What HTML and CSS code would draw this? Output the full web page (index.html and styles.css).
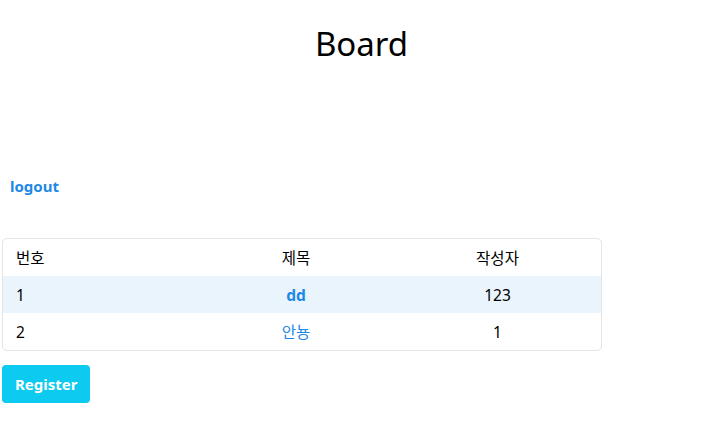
FILE: index.html
```html
<!DOCTYPE html>
<html lang="ko">
<head>
    <meta charset="UTF-8">
    <meta name="viewport" content="width=device-width, initial-scale=1.0">
    <title>Board</title>
    <link rel="stylesheet" href="styles.css">
</head>
<body>
    <h1 class="title">Board</h1>

    <div class="top-links">
        <a href="#" class="logout">logout</a>
    </div>

    <div class="board">
        <table class="board-table">
            <thead>
                <tr>
                    <th class="col-no">번호</th>
                    <th class="col-title">제목</th>
                    <th class="col-writer">작성자</th>
                </tr>
            </thead>
            <tbody>
                <tr class="active">
                    <td class="col-no">1</td>
                    <td class="col-title"><a href="#" class="post-link bold">dd</a></td>
                    <td class="col-writer">123</td>
                </tr>
                <tr>
                    <td class="col-no">2</td>
                    <td class="col-title"><a href="#" class="post-link">안뇽</a></td>
                    <td class="col-writer">1</td>
                </tr>
            </tbody>
        </table>
    </div>

    <button class="btn-register" type="button">Register</button>
</body>
</html>
```

FILE: styles.css
```css
body {
    font-family: 'Noto Sans', 'Noto Sans CJK KR', sans-serif;
    font-size: 15px;
    color: #000;
    background-color: #ffffff;
    margin: 0;
    padding: 0 2px;
}
.title {
    text-align: center;
    font-size: 33px;
    font-weight: 400;
    margin: 0;
    padding: 22px 0 0 18px;
    line-height: 44px;
}
.top-links {
    margin-top: 110px;
    padding-left: 8px;
}
.logout {
    color: #1e88e5;
    font-weight: 700;
    font-size: 15px;
    text-decoration: none;
}
.board {
    margin-top: 42px;
    width: 598px;
    border: 1px solid #e4e4e4;
    border-radius: 5px;
    overflow: hidden;
}
.board-table {
    width: 100%;
    border-collapse: collapse;
    table-layout: fixed;
}
.board-table th, .board-table td {
    box-sizing: border-box;
    height: 37px;
    padding: 0 13px;
    font-weight: 400;
    font-size: 15.5px;
}
.board-table thead th {
    height: 37px;
}
.col-no {
    width: 195px;
    text-align: left;
}
.col-title {
    width: 196px;
    text-align: center;
}
.col-writer {
    text-align: center;
}
.board-table tr.active {
    background-color: #eaf4fd;
}
.post-link {
    color: #1e88e5;
    text-decoration: none;
}
.post-link.bold {
    font-weight: 700;
}
.btn-register {
    margin-top: 14px;
    padding: 0 13px;
    height: 38px;
    background-color: #0dcaf0;
    color: #ffffff;
    border: none;
    border-radius: 4px;
    font-family: inherit;
    font-size: 15px;
    font-weight: 700;
    cursor: pointer;
}
```
